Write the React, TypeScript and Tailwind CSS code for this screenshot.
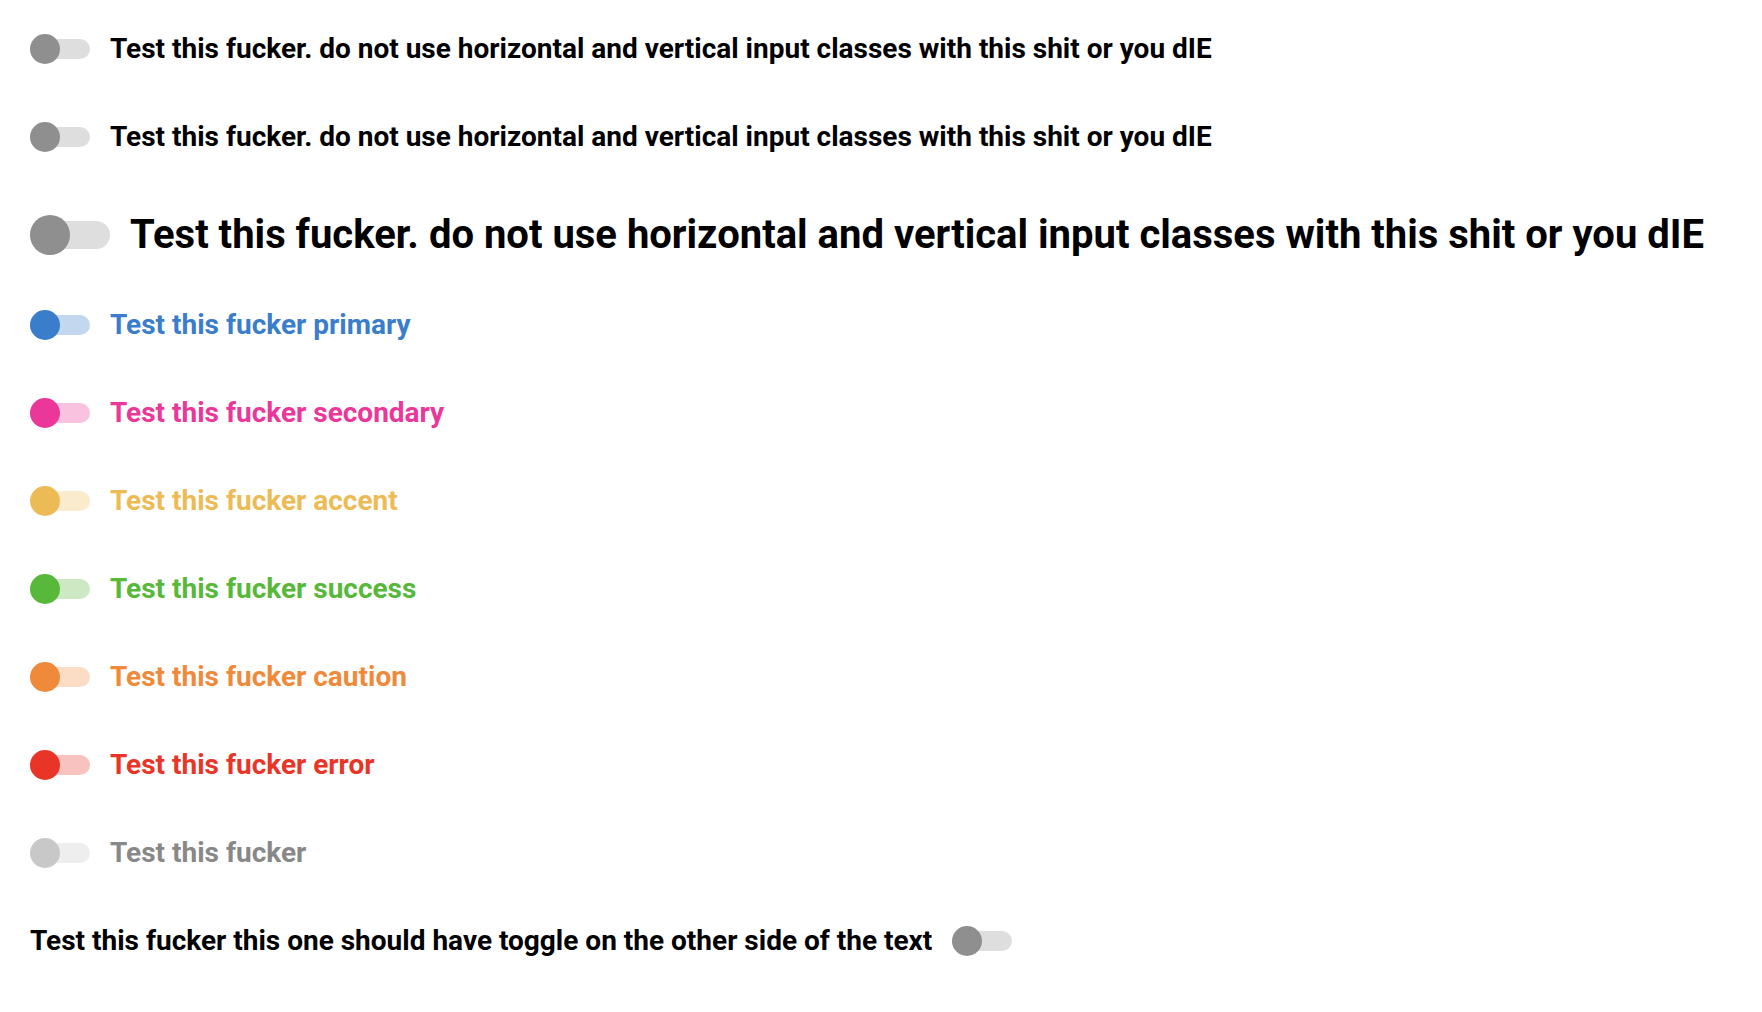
import React from 'react'

type Variant = 'default' | 'primary' | 'secondary' | 'accent' | 'success' | 'caution' | 'error' | 'disabled'

const styles: Record<Variant, { text: string; knob: string; track: string }> = {
	default: { text: 'text-black', knob: 'bg-[#8f8f8f]', track: 'bg-[#dedede]' },
	primary: { text: 'text-[#3a7dcb]', knob: 'bg-[#3a7dcb]', track: 'bg-[#c3d7ef]' },
	secondary: { text: 'text-[#ea3799]', knob: 'bg-[#ea3799]', track: 'bg-[#f9c3e0]' },
	accent: { text: 'text-[#edbb55]', knob: 'bg-[#edbb55]', track: 'bg-[#faebcd]' },
	success: { text: 'text-[#57b83a]', knob: 'bg-[#57b83a]', track: 'bg-[#cde9c4]' },
	caution: { text: 'text-[#ef8a3a]', knob: 'bg-[#ef8a3a]', track: 'bg-[#fbdcc4]' },
	error: { text: 'text-[#e93528]', knob: 'bg-[#e93528]', track: 'bg-[#f8c3bf]' },
	disabled: { text: 'text-[#888888]', knob: 'bg-[#c8c8c8]', track: 'bg-[#eeeeee]' },
}

const Toggle = ({ variant = 'default', large = false }: { variant?: Variant; large?: boolean }) => {
	const s = styles[variant]
	return (
		<span className={`relative flex shrink-0 items-center ${large ? 'w-[80px] h-[40px]' : 'w-[60px] h-[30px]'}`}>
			<span className={`w-full rounded-full ${s.track} ${large ? 'h-[28px]' : 'h-[20px]'}`} />
			<span className={`absolute left-0 top-0 rounded-full ${s.knob} ${large ? 'w-[40px] h-[40px]' : 'w-[30px] h-[30px]'}`} />
		</span>
	)
}

const LONG = 'Test this fucker. do not use horizontal and vertical input classes with this shit or you dIE'

export default function App() {
	const rows: { label: string; variant: Variant }[] = [
		{ label: 'Test this fucker primary', variant: 'primary' },
		{ label: 'Test this fucker secondary', variant: 'secondary' },
		{ label: 'Test this fucker accent', variant: 'accent' },
		{ label: 'Test this fucker success', variant: 'success' },
		{ label: 'Test this fucker caution', variant: 'caution' },
		{ label: 'Test this fucker error', variant: 'error' },
		{ label: 'Test this fucker', variant: 'disabled' },
	]

	return (
		<div className="min-h-screen bg-white pt-[5px] px-[30px] font-['Roboto',sans-serif] font-bold">
			<label className="flex h-[88px] items-center gap-[20px]">
				<Toggle />
				<span className="text-[28px] text-black">{LONG}</span>
			</label>
			<label className="flex h-[88px] items-center gap-[20px]">
				<Toggle />
				<span className="text-[28px] text-black">{LONG}</span>
			</label>
			<label className="flex h-[100px] items-center gap-[20px] pt-[7px]">
				<Toggle large />
				<span className="text-[40px] text-black">{LONG}</span>
			</label>
			{rows.map((r) => (
				<label key={r.variant} className="flex h-[88px] items-center gap-[20px]">
					<Toggle variant={r.variant} />
					<span className={`text-[28px] ${styles[r.variant].text}`}>{r.label}</span>
				</label>
			))}
			<label className="flex h-[88px] items-center gap-[20px]">
				<span className="text-[28px] text-black">Test this fucker this one should have toggle on the other side of the text</span>
				<Toggle />
			</label>
		</div>
	)
}
